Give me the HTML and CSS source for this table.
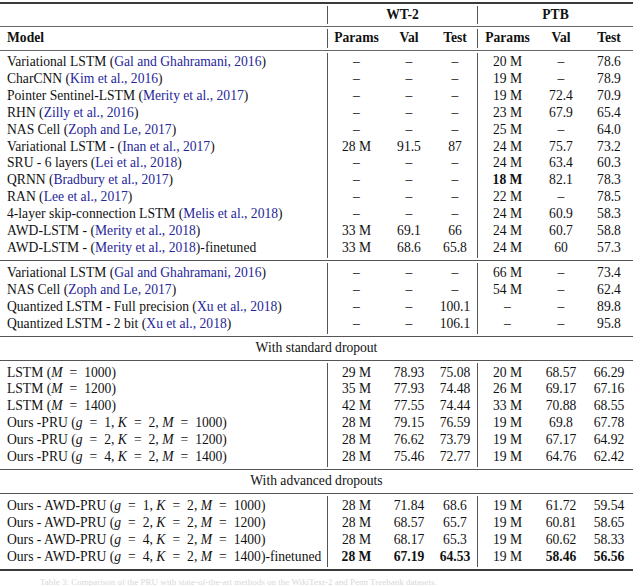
FILE: index.html
```html
<!DOCTYPE html>
<html>
<head>
<meta charset="utf-8">
<link rel="stylesheet" href="styles.css">
</head>
<body>
<table class="results">
<colgroup>
<col class="c-model"><col class="c-p1"><col class="c-v1"><col class="c-t1"><col class="c-p2"><col class="c-v2"><col class="c-t2">
</colgroup>
<tbody>
<tr class="rule"><td colspan="7"><div class="line thick"></div></td></tr>
<tr class="head1"><td></td><td colspan="3" class="vl">WT-2</td><td colspan="3" class="vl">PTB</td></tr>
<tr class="rule"><td colspan="7"><div class="line"></div></td></tr>
<tr class="head2"><td class="model">Model</td><td class="vl">Params</td><td>Val</td><td>Test</td><td class="vl">Params</td><td>Val</td><td>Test</td></tr>
<tr class="rule"><td colspan="7"><div class="line"></div></td></tr>

<tr class="first"><td class="model">Variational LSTM (<span class="cite">Gal and Ghahramani, 2016</span>)</td><td class="vl">–</td><td>–</td><td>–</td><td class="vl">20 M</td><td>–</td><td>78.6</td></tr>
<tr><td class="model">CharCNN (<span class="cite">Kim et al., 2016</span>)</td><td class="vl">–</td><td>–</td><td>–</td><td class="vl">19 M</td><td>–</td><td>78.9</td></tr>
<tr><td class="model">Pointer Sentinel-LSTM (<span class="cite">Merity et al., 2017</span>)</td><td class="vl">–</td><td>–</td><td>–</td><td class="vl">19 M</td><td>72.4</td><td>70.9</td></tr>
<tr><td class="model">RHN (<span class="cite">Zilly et al., 2016</span>)</td><td class="vl">–</td><td>–</td><td>–</td><td class="vl">23 M</td><td>67.9</td><td>65.4</td></tr>
<tr><td class="model">NAS Cell (<span class="cite">Zoph and Le, 2017</span>)</td><td class="vl">–</td><td>–</td><td>–</td><td class="vl">25 M</td><td>–</td><td>64.0</td></tr>
<tr><td class="model">Variational LSTM - (<span class="cite">Inan et al., 2017</span>)</td><td class="vl">28 M</td><td>91.5</td><td>87</td><td class="vl">24 M</td><td>75.7</td><td>73.2</td></tr>
<tr><td class="model">SRU - 6 layers (<span class="cite">Lei et al., 2018</span>)</td><td class="vl">–</td><td>–</td><td>–</td><td class="vl">24 M</td><td>63.4</td><td>60.3</td></tr>
<tr><td class="model">QRNN (<span class="cite">Bradbury et al., 2017</span>)</td><td class="vl">–</td><td>–</td><td>–</td><td class="vl"><b>18 M</b></td><td>82.1</td><td>78.3</td></tr>
<tr><td class="model">RAN (<span class="cite">Lee et al., 2017</span>)</td><td class="vl">–</td><td>–</td><td>–</td><td class="vl">22 M</td><td>–</td><td>78.5</td></tr>
<tr><td class="model">4-layer skip-connection LSTM (<span class="cite">Melis et al., 2018</span>)</td><td class="vl">–</td><td>–</td><td>–</td><td class="vl">24 M</td><td>60.9</td><td>58.3</td></tr>
<tr><td class="model">AWD-LSTM - (<span class="cite">Merity et al., 2018</span>)</td><td class="vl">33 M</td><td>69.1</td><td>66</td><td class="vl">24 M</td><td>60.7</td><td>58.8</td></tr>
<tr class="last"><td class="model">AWD-LSTM - (<span class="cite">Merity et al., 2018</span>)-finetuned</td><td class="vl">33 M</td><td>68.6</td><td>65.8</td><td class="vl">24 M</td><td>60</td><td>57.3</td></tr>
<tr class="rule"><td colspan="7"><div class="line dbl"></div></td></tr>

<tr class="first"><td class="model">Variational LSTM (<span class="cite">Gal and Ghahramani, 2016</span>)</td><td class="vl">–</td><td>–</td><td>–</td><td class="vl">66 M</td><td>–</td><td>73.4</td></tr>
<tr><td class="model">NAS Cell (<span class="cite">Zoph and Le, 2017</span>)</td><td class="vl">–</td><td>–</td><td>–</td><td class="vl">54 M</td><td>–</td><td>62.4</td></tr>
<tr><td class="model">Quantized LSTM - Full precision (<span class="cite">Xu et al., 2018</span>)</td><td class="vl">–</td><td>–</td><td>100.1</td><td class="vl">–</td><td>–</td><td>89.8</td></tr>
<tr class="last"><td class="model">Quantized LSTM - 2 bit (<span class="cite">Xu et al., 2018</span>)</td><td class="vl">–</td><td>–</td><td>106.1</td><td class="vl">–</td><td>–</td><td>95.8</td></tr>
<tr class="rule"><td colspan="7"><div class="line dbl"></div></td></tr>

<tr class="section"><td colspan="7">With standard dropout</td></tr>
<tr class="rule"><td colspan="7"><div class="line dbl"></div></td></tr>

<tr class="first"><td class="model">LSTM (<i>M</i><span class="eq">=</span>1000)</td><td class="vl">29 M</td><td>78.93</td><td>75.08</td><td class="vl">20 M</td><td>68.57</td><td>66.29</td></tr>
<tr><td class="model">LSTM (<i>M</i><span class="eq">=</span>1200)</td><td class="vl">35 M</td><td>77.93</td><td>74.48</td><td class="vl">26 M</td><td>69.17</td><td>67.16</td></tr>
<tr><td class="model">LSTM (<i>M</i><span class="eq">=</span>1400)</td><td class="vl">42 M</td><td>77.55</td><td>74.44</td><td class="vl">33 M</td><td>70.88</td><td>68.55</td></tr>
<tr><td class="model">Ours -PRU (<i>g</i><span class="eq">=</span>1, <i>K</i><span class="eq">=</span>2, <i>M</i><span class="eq">=</span>1000)</td><td class="vl">28 M</td><td>79.15</td><td>76.59</td><td class="vl">19 M</td><td>69.8</td><td>67.78</td></tr>
<tr><td class="model">Ours -PRU (<i>g</i><span class="eq">=</span>2, <i>K</i><span class="eq">=</span>2, <i>M</i><span class="eq">=</span>1200)</td><td class="vl">28 M</td><td>76.62</td><td>73.79</td><td class="vl">19 M</td><td>67.17</td><td>64.92</td></tr>
<tr class="last"><td class="model">Ours -PRU (<i>g</i><span class="eq">=</span>4, <i>K</i><span class="eq">=</span>2, <i>M</i><span class="eq">=</span>1400)</td><td class="vl">28 M</td><td>75.46</td><td>72.77</td><td class="vl">19 M</td><td>64.76</td><td>62.42</td></tr>
<tr class="rule"><td colspan="7"><div class="line dbl"></div></td></tr>

<tr class="section"><td colspan="7">With advanced dropouts</td></tr>
<tr class="rule"><td colspan="7"><div class="line dbl"></div></td></tr>

<tr class="first"><td class="model">Ours - AWD-PRU (<i>g</i><span class="eq">=</span>1, <i>K</i><span class="eq">=</span>2, <i>M</i><span class="eq">=</span>1000)</td><td class="vl">28 M</td><td>71.84</td><td>68.6</td><td class="vl">19 M</td><td>61.72</td><td>59.54</td></tr>
<tr><td class="model">Ours - AWD-PRU (<i>g</i><span class="eq">=</span>2, <i>K</i><span class="eq">=</span>2, <i>M</i><span class="eq">=</span>1200)</td><td class="vl">28 M</td><td>68.57</td><td>65.7</td><td class="vl">19 M</td><td>60.81</td><td>58.65</td></tr>
<tr><td class="model">Ours - AWD-PRU (<i>g</i><span class="eq">=</span>4, <i>K</i><span class="eq">=</span>2, <i>M</i><span class="eq">=</span>1400)</td><td class="vl">28 M</td><td>68.17</td><td>65.3</td><td class="vl">19 M</td><td>60.62</td><td>58.33</td></tr>
<tr class="last"><td class="model">Ours - AWD-PRU (<i>g</i><span class="eq">=</span>4, <i>K</i><span class="eq">=</span>2, <i>M</i><span class="eq">=</span>1400)-finetuned</td><td class="vl"><b>28 M</b></td><td><b>67.19</b></td><td><b>64.53</b></td><td class="vl">19 M</td><td><b>58.46</b></td><td><b>56.56</b></td></tr>
<tr class="rule"><td colspan="7"><div class="line thick"></div></td></tr>
</tbody>
</table>
<p class="caption">Table 3: Comparison of the PRU with state-of-the-art methods on the WikiText-2 and Penn Treebank datasets.</p>
</body>
</html>
```
FILE: styles.css
```css
html, body {
  margin: 0;
  padding: 0;
  background: #ffffff;
}
body {
  font-family: "Liberation Serif", "Times New Roman", serif;
  font-size: 13.6px;
  color: #111111;
  width: 640px;
  height: 586px;
  overflow: hidden;
}
.results {
  width: 633px;
  border-collapse: separate;
  border-spacing: 0;
  table-layout: fixed;
}
.c-model { width: 327px; }
.c-p1 { width: 58px; }
.c-v1 { width: 48px; }
.c-t1 { width: 44px; }
.c-p2 { width: 60px; }
.c-v2 { width: 48px; }
.c-t2 { width: 48px; }

.results td {
  padding: 0;
  text-align: center;
  line-height: 16.9px;
  white-space: nowrap;
}
.results td.model {
  text-align: left;
  padding-left: 7px;
}
.results td.vl {
  border-left: 1px solid #555;
}
.results tr.first td { padding-top: 1.5px; }
.results tr.last td { padding-bottom: 1px; }

.head1 td, .head2 td {
  font-weight: bold;
}
.head1 td { line-height: 18px; }
.head2 td { line-height: 18.5px; }

.rule td {
  padding: 2px 0 !important;
  line-height: 0;
}
.line {
  height: 1px;
  background: #6a6a6a;
}
.line.thick {
  height: 2px;
  background: #3a3a3a;
}
.line.dbl {
  height: 1.5px;
  background: #555;
}
.section td {
  line-height: 18px;
}
.section + .rule td {
  padding-top: 2.5px !important;
}
.cite {
  color: #26269a;
}
.eq {
  margin: 0 7px;
}
.caption {
  margin: 4px 0 0 40px;
  color: #d8d8d8;
  font-size: 9px;
  line-height: 10px;
  white-space: nowrap;
}
```
